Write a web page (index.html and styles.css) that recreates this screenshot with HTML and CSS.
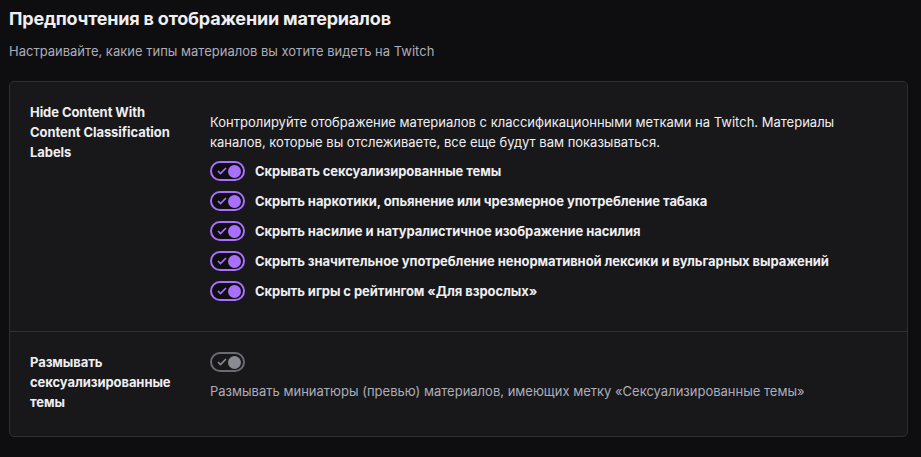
FILE: index.html
```html
<!DOCTYPE html>
<html lang="ru">
<head>
  <meta charset="utf-8">
  <title>Предпочтения в отображении материалов</title>
  <link rel="stylesheet" href="styles.css">
</head>
<body>
  <div class="page">
    <div class="header">
      <h2>Предпочтения в отображении материалов</h2>
      <p>Настраивайте, какие типы материалов вы хотите видеть на Twitch</p>
    </div>

    <div class="card">
      <div class="setting">
        <div class="setting-label">Hide Content With Content Classification Labels</div>
        <div class="setting-body first">
          <p class="desc">Контролируйте отображение материалов с классификационными метками на Twitch. Материалы каналов, которые вы отслеживаете, все еще будут вам показываться.</p>
          <div class="toggle-list">
            <label class="toggle-row">
              <span class="toggle on"><svg viewBox="0 0 10 8"><path d="M1 4l2.5 2.5L9 1"/></svg><i></i></span>
              <span>Скрывать сексуализированные темы</span>
            </label>
            <label class="toggle-row">
              <span class="toggle on"><svg viewBox="0 0 10 8"><path d="M1 4l2.5 2.5L9 1"/></svg><i></i></span>
              <span>Скрыть наркотики, опьянение или чрезмерное употребление табака</span>
            </label>
            <label class="toggle-row">
              <span class="toggle on"><svg viewBox="0 0 10 8"><path d="M1 4l2.5 2.5L9 1"/></svg><i></i></span>
              <span>Скрыть насилие и натуралистичное изображение насилия</span>
            </label>
            <label class="toggle-row">
              <span class="toggle on"><svg viewBox="0 0 10 8"><path d="M1 4l2.5 2.5L9 1"/></svg><i></i></span>
              <span>Скрыть значительное употребление ненормативной лексики и вульгарных выражений</span>
            </label>
            <label class="toggle-row">
              <span class="toggle on"><svg viewBox="0 0 10 8"><path d="M1 4l2.5 2.5L9 1"/></svg><i></i></span>
              <span>Скрыть игры с рейтингом «Для взрослых»</span>
            </label>
          </div>
        </div>
      </div>

      <div class="setting last">
        <div class="setting-label">Размывать сексуализированные темы</div>
        <div class="setting-body">
          <span class="toggle off"><svg viewBox="0 0 10 8"><path d="M1 4l2.5 2.5L9 1"/></svg><i></i></span>
          <p class="desc muted">Размывать миниатюры (превью) материалов, имеющих метку «Сексуализированные темы»</p>
        </div>
      </div>
    </div>
  </div>
</body>
</html>
```

FILE: styles.css
```css
body {
  margin: 0;
  background: #0e0e10;
  color: #efeff1;
  font-family: Inter, 'Noto Sans', sans-serif;
  font-size: 13px;
}

.page {
  padding: 0 13px 0 9px;
}

.header h2 {
  margin: 0;
  padding-top: 7px;
  font-size: 18px;
  line-height: 24px;
  font-weight: 700;
  letter-spacing: -0.2px;
}

.header p {
  margin: 10px 0 0;
  line-height: 20px;
  color: #adadb8;
}

.card {
  margin-top: 20px;
  background: #18181b;
  border: 1px solid #2f2f35;
  border-radius: 5px;
}

.setting {
  display: grid;
  grid-template-columns: 160px 1fr;
  column-gap: 20px;
  padding: 20px 20px 30px;
  border-bottom: 1px solid #2f2f35;
}

.setting.last {
  border-bottom: none;
  padding: 20px 20px 24px;
}

.setting-label {
  font-weight: 700;
  letter-spacing: -0.07px;
  line-height: 20px;
}

.setting-body.first {
  padding-top: 10px;
}

.desc {
  margin: 0;
  line-height: 20px;
}

.desc.muted {
  margin-top: 9px;
  color: #adadb8;
}

.toggle-list {
  display: flex;
  flex-direction: column;
  gap: 10px;
  margin-top: 9px;
}

.toggle-row {
  display: flex;
  align-items: center;
  gap: 10px;
  font-weight: 700;
  letter-spacing: -0.07px;
  line-height: 20px;
}

.toggle {
  display: flex;
  align-items: center;
  justify-content: space-between;
  width: 35px;
  height: 20px;
  padding: 0 2px 0 5px;
  box-sizing: border-box;
  border: 2px solid #a970ff;
  border-radius: 10px;
  background: #0e0e10;
  flex-shrink: 0;
}

.toggle svg {
  width: 10px;
  height: 8px;
  fill: none;
  stroke: #a970ff;
  stroke-width: 1.7;
}

.toggle i {
  width: 13px;
  height: 13px;
  border-radius: 50%;
  background: #a970ff;
}

.toggle.off {
  border-color: #6b6b73;
  background: transparent;
}

.toggle.off svg {
  stroke: #8a8a92;
}

.toggle.off i {
  background: #8a8a92;
}
```
